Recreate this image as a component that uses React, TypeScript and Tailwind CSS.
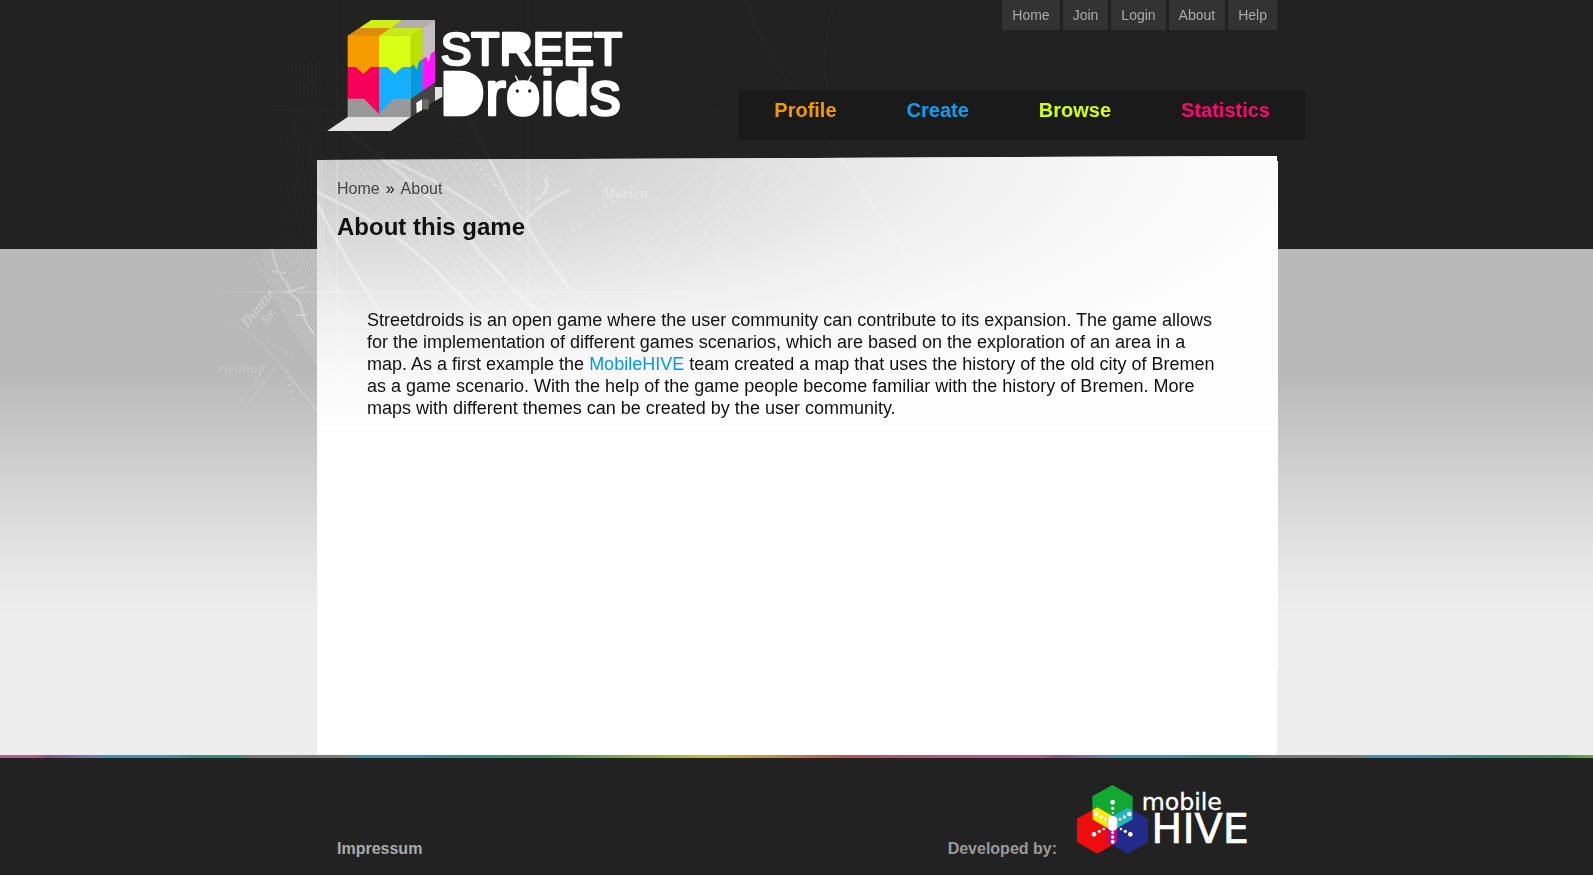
const topLinks = ["Home", "Join", "Login", "About", "Help"];

const mainLinks = [
  { label: "Profile", color: "text-[#f39a00]" },
  { label: "Create", color: "text-[#0aa0f5]" },
  { label: "Browse", color: "text-[#d4ff0a]" },
  { label: "Statistics", color: "text-[#fa0a6e]" },
];

function StreetDroidsLogo() {
  return (
    <svg viewBox="51 57 891 339" className="h-[113px] w-[297px]" role="img" aria-label="Street Droids">
      <polygon points="114,108 184,61 374,61 374,247 302,296 302,350 114,350" fill="#a8a860" />
      <polygon points="148,84 184,60 277,60 243,84" fill="#cdf014" />
      <polygon points="243,84 277,60 375,60 338,84" fill="#b3adad" />
      <polygon points="113,107 148,84 243,84 207,107" fill="#dc8c0a" />
      <polygon points="207,107 243,84 338,84 302,107" fill="#c8ea18" />
      <polygon points="302,107 338,84 338,200 302,215" fill="#bce000" />
      <polygon points="338,84 375,60 375,180 338,200" fill="#c4bebe" />
      <polygon points="302,290 375,240 375,303 302,351" fill="#444444" />
      <polygon points="302,201 310,193 314,199 320,210 327,185 338,177 338,272 302,296" fill="#0099e5" />
      <polygon points="338,178 347,170 351,174 356,187 362,162 375,152 375,247 338,272" fill="#ff14ff" />
      <polygon points="319,308 336,298 336,330 320,340" fill="#ffffff" />
      <rect x="337" y="298" width="19" height="30" fill="#6a6a6a" />
      <polygon points="375,261 397,261 397,290 375,303" fill="#e4e4e4" />
      <rect x="113" y="290" width="189" height="61" fill="#999999" />
      <polygon points="113,201 207,201 207,342 162,296 113,296" fill="#f5005a" />
      <polygon points="207,201 302,201 302,296 251,296 207,342" fill="#14b0ff" />
      <polygon points="113,107 207,107 207,201 183,201 160,222 137,201 113,201" fill="#f59b00" />
      <polygon points="207,107 302,107 302,201 277,201 254,222 232,201 207,201" fill="#d9ff14" />
      <polygon points="113,351 302,351 242,393 51,393" fill="#e4e4e4" />
      <g
        fill="#ffffff"
        stroke="#ffffff"
        strokeLinejoin="round"
        fontFamily="'Liberation Sans', sans-serif"
      >
        <text x="392" y="195" fontSize="138" strokeWidth="8">STREET</text>
        <text x="389" y="345" fontSize="188" strokeWidth="8">Droids</text>
      </g>
      <path d="M590 102h30q28 6 28 27t-28 25h-30z" fill="#ffffff" />
      <path d="M412 226h38q60 8 60 58t-60 60h-38z" fill="#ffffff" />
      <circle cx="640" cy="297" r="47" fill="#ffffff" />
      <ellipse cx="784" cy="297" rx="41" ry="46" fill="#ffffff" />
      <path d="M616 227l12 24M664 227l-12 24" stroke="#ffffff" strokeWidth="4" />
      <circle cx="622" cy="273" r="5" fill="#222222" />
      <circle cx="659" cy="273" r="5" fill="#222222" />
    </svg>
  );
}

function MobileHiveLogo() {
  const green = "106,0 167,34 167,103 106,138 46,103 46,34";
  const red = "61,67 121,101 121,171 61,206 0,171 0,101";
  const blue = "152,67 213,101 213,171 152,206 92,171 92,101";
  return (
    <svg viewBox="0 0 540 207" className="h-[69px] w-[180px]" role="img" aria-label="mobile HIVE">
      <defs>
        <clipPath id="in-green">
          <polygon points={green} />
        </clipPath>
        <clipPath id="in-red">
          <polygon points={red} />
        </clipPath>
      </defs>
      <polygon points={green} fill="#12a834" />
      <polygon points={red} fill="#ee0c0c" />
      <polygon points={blue} fill="#222a8c" />
      <polygon points={red} fill="#fbe90a" clipPath="url(#in-green)" />
      <polygon points={blue} fill="#24b8b4" clipPath="url(#in-green)" />
      <polygon points={blue} fill="#b80c84" clipPath="url(#in-red)" />
      <rect x="92" y="93" width="29" height="44" rx="13" fill="#ffffff" />
      <g fill="#ffffff">
        <circle cx="107" cy="52" r="7" />
        <circle cx="107" cy="70" r="5" />
        <circle cx="107" cy="84" r="3" />
        <circle cx="57" cy="87" r="7" />
        <circle cx="72" cy="96" r="5" />
        <circle cx="85" cy="103" r="4" />
        <circle cx="157" cy="87" r="7" />
        <circle cx="142" cy="96" r="5" />
        <circle cx="129" cy="103" r="4" />
        <circle cx="51" cy="148" r="7" />
        <circle cx="67" cy="139" r="5" />
        <circle cx="80" cy="132" r="4" />
        <circle cx="160" cy="148" r="7" />
        <circle cx="145" cy="139" r="5" />
        <circle cx="132" cy="132" r="4" />
        <circle cx="107" cy="143" r="4" />
        <circle cx="107" cy="156" r="5" />
        <circle cx="107" cy="170" r="6" />
      </g>
      <g fill="#ffffff" stroke="#ffffff" fontWeight="normal" fontFamily="'DejaVu Sans', sans-serif">
        <text x="194" y="74" fontSize="71" strokeWidth="1">mobile</text>
        <text x="223" y="175" fontSize="124" strokeWidth="2">HIVE</text>
      </g>
    </svg>
  );
}

const range = (n: number) => Array.from({ length: n }, (_, i) => i);

/* Old city map: river contours, railway lines, street blocks and street names. */
function CityMap() {
  return (
    <svg
      viewBox="216 0 1100 430"
      className="pointer-events-none absolute top-0 -left-[101px] h-[430px] w-[1100px]"
      aria-hidden="true"
    >
      <defs>
        <linearGradient id="fade" x1="216" x2="1100" y1="0" y2="0" gradientUnits="userSpaceOnUse">
          <stop offset="0" stopColor="#fff" stopOpacity="0.15" />
          <stop offset="0.1" stopColor="#fff" />
          <stop offset="0.45" stopColor="#fff" stopOpacity="0.8" />
          <stop offset="1" stopColor="#fff" stopOpacity="0.1" />
        </linearGradient>
        <mask id="map-fade" maskUnits="userSpaceOnUse" x="216" y="0" width="1100" height="430">
          <rect x="216" y="0" width="1100" height="430" fill="url(#fade)" />
        </mask>
        <clipPath id="sky">
          <path d="M216 0H1316V156L317 160V249H216z" />
        </clipPath>
        <clipPath id="side">
          <rect x="216" y="249" width="101" height="181" />
        </clipPath>
        <clipPath id="sheet">
          <path d="M317 160L1277 156V427H317z" />
        </clipPath>
        <g id="city" fill="none" stroke="#fff">
          <g strokeWidth="1">
            {range(22).map((i) => (
              <path
                key={i}
                opacity="0.5"
                d={`M${235 + i * 4} 60C${240 + i * 4} 150 ${256 + i * 3} 220 ${264 + i * 3} 260S${290 + i * 4} 330 ${
                  345 + i * 4
                } 400`}
              />
            ))}
            {range(16).map((i) => (
              <path key={i} opacity="0.35" d={`M${300 + i * 9} 60L${500 + i * 11} 420`} />
            ))}
            {range(12).map((i) => (
              <path key={i} opacity="0.35" d={`M${316 + i * 4} ${165 - i * 3}L${560 + i * 4} ${400 - i * 8}`} />
            ))}
            {range(9).map((i) => (
              <path key={i} opacity="0.4" d={`M${502 + i * 5} ${178 - i * 2}l24 28`} />
            ))}
            {range(8).map((i) => (
              <path key={i} opacity="0.4" d={`M${650 + i * 20} ${205 - i * 4}l38 -34l16 20l-38 34z`} />
            ))}
            {range(6).map((i) => (
              <path key={i} opacity="0.35" d={`M${590 + i * 24} ${262 - i * 8}l34 -22l12 20l-34 22z`} />
            ))}
            <path opacity="0.6" d="M216 292H700M337 0V420M528 0V300M718 0V260M216 110H900" />
          </g>
          <g strokeWidth="3" opacity="0.6">
            <path d="M330 120Q430 190 470 240T560 330" />
            <path d="M317 192Q400 230 450 285T600 380" />
            <path d="M390 160Q470 195 520 240" />
            <path d="M440 60Q480 140 500 180T525 222Q540 250 570 290" />
            <path d="M525 222Q535 205 570 190M545 178Q552 190 536 200" />
            <path d="M745 0Q770 60 800 100T910 260" />
            <path d="M835 0Q815 60 835 130" />
            <path d="M318 205Q345 260 385 320" />
          </g>
          <g strokeWidth="2" opacity="0.7">
            <path d="M272 249Q276 270 283 278T290 294Q300 298 302 310T315 335M272 271l14 2M283 293l22 -6M296 315h10" />
            <path d="M222 320Q252 330 268 350T317 410M240 404L268 362M248 404L276 366" opacity="0.5" />
          </g>
          <path d="M452 120Q482 190 550 225" strokeWidth="2" strokeDasharray="3 4" opacity="0.6" />
          <path
            d="M560 240L640 180M700 240L790 170M590 170L650 260M760 165L800 230"
            strokeWidth="6"
            strokeDasharray="2 6"
            opacity="0.35"
          />
          <path
            d="M248 251Q262 270 268 282M280 296L286 315M268 340L292 358M288 370L292 400"
            strokeWidth="4"
            strokeDasharray="2 5"
            opacity="0.35"
          />
        </g>
      </defs>
      <g mask="url(#map-fade)">
        <g clipPath="url(#sky)" opacity="0.04">
          <use href="#city" />
        </g>
        <g clipPath="url(#side)" opacity="0.5">
          <use href="#city" />
        </g>
        <g clipPath="url(#sheet)" opacity="0.6">
          <use href="#city" />
        </g>
      </g>
      <g
        fill="#fff"
        opacity="0.28"
        fontFamily="'Liberation Serif', serif"
        fontStyle="italic"
        fontWeight="bold"
        fontSize="15"
      >
        <text transform="translate(247 328) rotate(-50)">Duntze</text>
        <text transform="translate(266 325) rotate(-50)" fontSize="12">Str.</text>
        <text x="218" y="373" opacity="0.5">riedhof</text>
        <text x="602" y="198">Marien</text>
      </g>
    </svg>
  );
}

export default function App() {
  return (
    <div className="flex min-h-screen flex-col overflow-x-hidden bg-[linear-gradient(to_bottom,#222_249px,#b8b8b8_249px,#b8b8b8_370px,#c6c6c6_430px,#d7d7d7_500px,#e6e6e6_565px,#ededed_615px)] font-['Liberation_Sans',Arial,sans-serif] text-[#111]">
      <div className="mx-auto flex w-full max-w-[961px] flex-1 flex-col pl-px">
        <div className="relative flex flex-1 flex-col">
          <div
            className="absolute inset-x-0 top-[156px] -right-px bottom-0 bg-white bg-[radial-gradient(ellipse_960px_271px_at_60px_0px,#c8c8c8_0%,#dcdcdc_35%,#efefef_60%,#f8f8f8_80%,#fdfdfd_100%)] bg-[length:100%_271px] bg-no-repeat [clip-path:polygon(0_4px,calc(100%-1px)_0,calc(100%-1px)_5px,100%_5px,100%_515px,calc(100%-1px)_515px,calc(100%-1px)_100%,0_100%)]"
            aria-hidden="true"
          />
          <CityMap />

          <header className="relative flex h-[156px] justify-between">
            <a href="#home" className="mt-[19px] ml-[10px] self-start">
              <StreetDroidsLogo />
            </a>
            <div className="flex flex-col items-end">
              <nav aria-label="Account">
                <ul className="flex gap-[3px]">
                  {topLinks.map((label) => (
                    <li key={label}>
                      <a
                        href={`#${label.toLowerCase()}`}
                        className="block bg-[#333] px-[10px] text-[14px] leading-[30px] text-[#aaa]"
                      >
                        {label}
                      </a>
                    </li>
                  ))}
                </ul>
              </nav>
              <nav aria-label="Main" className="mt-[60px] -mr-7 h-[50px] bg-[#1a1a1a]">
                <ul className="flex">
                  {mainLinks.map(({ label, color }) => (
                    <li key={label}>
                      <a
                        href={`#${label.toLowerCase()}`}
                        className={`block px-[35px] text-[20px] leading-10 font-bold ${color}`}
                      >
                        {label}
                      </a>
                    </li>
                  ))}
                </ul>
              </nav>
            </div>
          </header>

          <main className="relative px-5 pt-[21px] pb-10">
            <nav aria-label="Breadcrumb" className="flex gap-[6px] text-[16px] leading-6">
              <a href="#home" className="text-[#444]">Home</a>
              <span>»</span>
              <a href="#about" className="text-[#444]">About</a>
            </nav>
            <h1 className="mt-[11px] text-[24px] leading-[30px] font-bold">About this game</h1>
            <p className="mt-[67px] pr-9 pl-[30px] text-[18px] leading-[22px]">
              Streetdroids is an open game where the user community can contribute to its expansion. The game allows for
              the implementation of different games scenarios, which are based on the exploration of an area in a map. As
              a first example the{" "}
              <a href="#mobilehive" className="text-[#0099e5]">MobileHIVE</a> team created a map that uses the history of
              the old city of Bremen as a game scenario. With the help of the game people become familiar with the history
              of Bremen. More maps with different themes can be created by the user community.
            </p>
          </main>
        </div>
      </div>

      <footer className="border-b border-[#1a1a1a] bg-[#222]">
        <div className="h-[3px] bg-[linear-gradient(to_right,#c0568a_0px,#c0568a_35px,#8d4d8f_47px,#6a80b0_95px,#3596bd_104px,#3596bd_160px,#2c9090_190px,#309080_235px,#777_252px,#7a7a7a_345px,#3596bd_362px,#3596bd_400px,#2c9090_450px,#3a9550_550px,#6aa84a_600px,#c8bc30_710px,#c88040_790px,#c05050_845px,#c05080_940px,#c0568a_1040px,#8d4d8f_1058px,#6a80b0_1106px,#3596bd_1115px,#3596bd_1171px,#2c9090_1201px,#309080_1246px,#777_1263px,#7a7a7a_1356px,#3596bd_1373px,#3596bd_1411px,#2c9090_1461px,#3a9550_1561px,#6aa84a_1593px)]" />
        <div className="mx-auto flex w-full max-w-[961px] items-end justify-between pt-[27px] pr-5 pb-[13px] pl-[21px] text-[16px] leading-6 font-bold">
          <a href="#impressum" className="text-[#aaa]">Impressum</a>
          <div className="flex items-end gap-5">
            <span className="text-[#999]">Developed by:</span>
            <a href="#mobilehive" className="mb-[7px]">
              <MobileHiveLogo />
            </a>
          </div>
        </div>
      </footer>
    </div>
  );
}
